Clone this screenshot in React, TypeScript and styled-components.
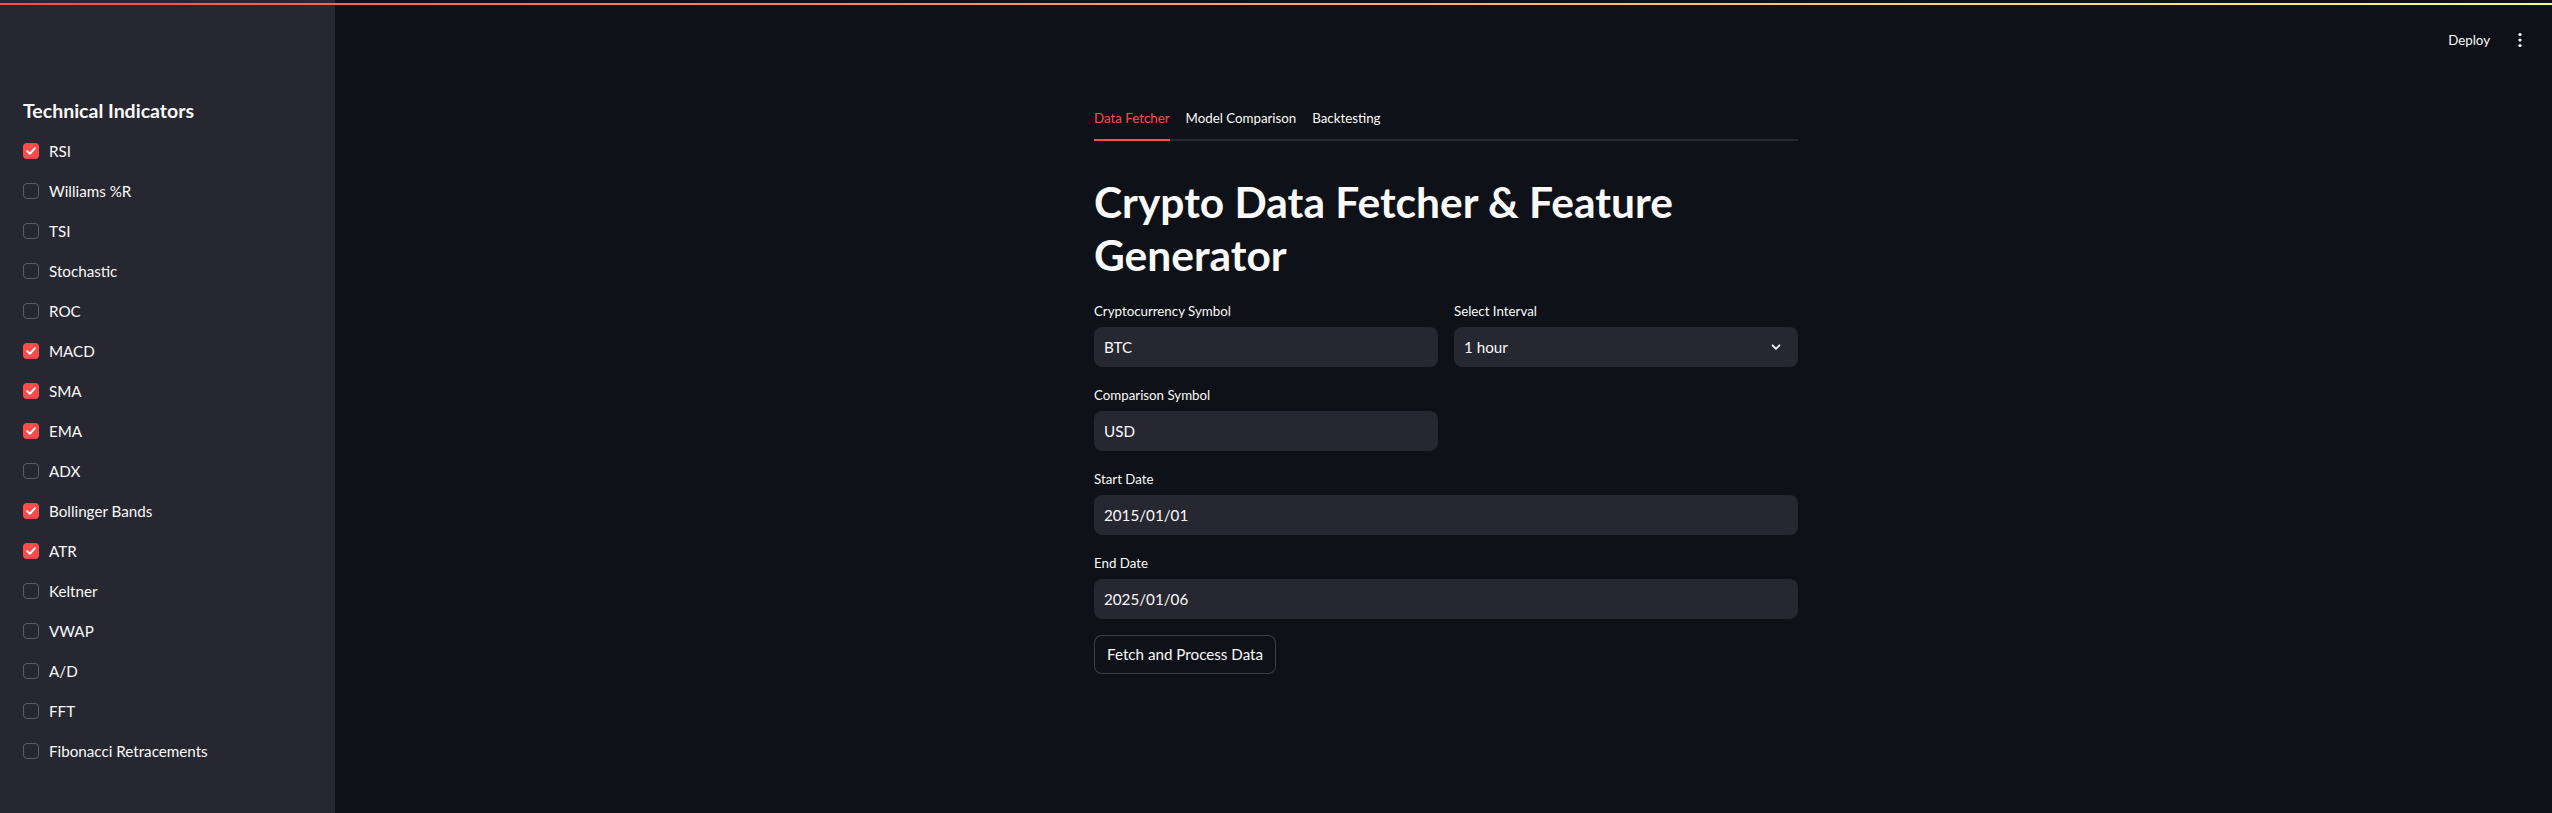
import React from "react";
import styled, { createGlobalStyle } from "styled-components";

const FONT = `"Source Sans Pro", Lato, "Noto Sans", sans-serif`;

const GlobalStyle = createGlobalStyle`
  html, body { margin: 0; padding: 0; background: #0e1117; }
  body { font-family: ${FONT}; color: #fafafa; }
  * { box-sizing: border-box; }
`;

const Page = styled.div`
  position: relative;
  display: flex;
  min-height: 813px;
  background: #0e1117;
`;

const Decoration = styled.div`
  position: absolute;
  top: 3px;
  left: 0;
  right: 0;
  height: 2px;
  background: linear-gradient(90deg, #ff4b4b, #fffd80);
  z-index: 5;
`;

const Sidebar = styled.aside`
  width: 335px;
  flex: 0 0 335px;
  background: #262730;
  padding: 96px 23px 40px;
  display: flex;
  flex-direction: column;
`;

const SideHeading = styled.h2`
  margin: 0 0 13px;
  font-size: 19.5px;
  line-height: 30px;
  font-weight: 700;
  color: #fafafa;
`;

const CheckList = styled.div`
  display: flex;
  flex-direction: column;
  gap: 16px;
`;

const CheckRow = styled.label`
  display: flex;
  align-items: center;
  gap: 10px;
  height: 24px;
  font-size: 15.2px;
  color: #fafafa;
`;

const Box = styled.span<{ $checked: boolean }>`
  width: 16px;
  height: 16px;
  border-radius: 4px;
  flex: 0 0 16px;
  display: flex;
  align-items: center;
  justify-content: center;
  background: ${(p) => (p.$checked ? "#ff4b4b" : "transparent")};
  border: ${(p) => (p.$checked ? "none" : "1px solid #5b5c64")};
`;

const Main = styled.main`
  flex: 1;
  display: flex;
  flex-direction: column;
  padding-left: 5px;
`;

const Header = styled.header`
  height: 80px;
  display: flex;
  align-items: center;
  justify-content: flex-end;
  gap: 14px;
  padding-right: 24px;
`;

const DeployButton = styled.button`
  background: transparent;
  border: none;
  color: #fafafa;
  font-family: ${FONT};
  font-size: 13.3px;
  padding: 0 8px;
  height: 32px;
`;

const KebabButton = styled.button`
  background: transparent;
  border: none;
  width: 16px;
  height: 32px;
  padding: 0;
  display: flex;
  align-items: center;
  justify-content: center;
`;

const Content = styled.section`
  width: 704px;
  margin: 0 auto;
  padding-top: 21px;
  display: flex;
  flex-direction: column;
`;

const TabList = styled.div`
  display: flex;
  gap: 16px;
  border-bottom: 2px solid #262730;
`;

const Tab = styled.div<{ $active?: boolean }>`
  height: 40px;
  margin-bottom: -2px;
  padding-bottom: 4px;
  display: flex;
  align-items: center;
  font-size: 13.3px;
  color: ${(p) => (p.$active ? "#ff4b4b" : "#fafafa")};
  border-bottom: 2px solid ${(p) => (p.$active ? "#ff4b4b" : "transparent")};
`;

const Title = styled.h1`
  margin: 35px 0 17px;
  font-size: 42.5px;
  line-height: 52.8px;
  font-weight: 700;
  color: #fafafa;
  max-width: 620px;
`;

const Form = styled.div`
  display: flex;
  flex-direction: column;
  gap: 16px;
`;

const Row = styled.div`
  display: grid;
  grid-template-columns: 1fr 1fr;
  gap: 16px;
`;

const Field = styled.div`
  display: flex;
  flex-direction: column;
  gap: 4px;
`;

const Label = styled.div`
  height: 24px;
  display: flex;
  align-items: center;
  font-size: 13.3px;
  color: #fafafa;
`;

const InputBox = styled.div`
  height: 40px;
  background: #262730;
  border-radius: 8px;
  padding: 0 10px;
  display: flex;
  align-items: center;
  justify-content: space-between;
  font-size: 15.2px;
  color: #fafafa;
`;

const Button = styled.button`
  align-self: flex-start;
  height: 39px;
  padding: 0 12px;
  background: #0e1117;
  border: 1px solid rgba(250, 250, 250, 0.2);
  border-radius: 8px;
  color: #fafafa;
  font-family: ${FONT};
  font-size: 15.2px;
`;

const indicators: [string, boolean][] = [
  ["RSI", true],
  ["Williams %R", false],
  ["TSI", false],
  ["Stochastic", false],
  ["ROC", false],
  ["MACD", true],
  ["SMA", true],
  ["EMA", true],
  ["ADX", false],
  ["Bollinger Bands", true],
  ["ATR", true],
  ["Keltner", false],
  ["VWAP", false],
  ["A/D", false],
  ["FFT", false],
  ["Fibonacci Retracements", false],
];

const Check = () => (
  <svg width="12" height="12" viewBox="0 0 12 12">
    <path d="M2.2 6.3 L4.8 8.7 L9.8 3.4" fill="none" stroke="#fff" strokeWidth="2" strokeLinecap="round" strokeLinejoin="round" />
  </svg>
);

const Chevron = () => (
  <svg width="12" height="12" viewBox="0 0 12 12" style={{ marginRight: 6 }}>
    <path d="M2.5 4.3 L6 7.8 L9.5 4.3" fill="none" stroke="#fafafa" strokeWidth="1.8" strokeLinecap="round" strokeLinejoin="round" />
  </svg>
);

const Kebab = () => (
  <svg width="6" height="16" viewBox="0 0 6 16">
    <circle cx="3" cy="2.5" r="1.6" fill="#fafafa" />
    <circle cx="3" cy="8" r="1.6" fill="#fafafa" />
    <circle cx="3" cy="13.5" r="1.6" fill="#fafafa" />
  </svg>
);

export default function App() {
  return (
    <>
      <GlobalStyle />
      <Page>
        <Decoration />
        <Sidebar>
          <SideHeading>Technical Indicators</SideHeading>
          <CheckList>
            {indicators.map(([name, on]) => (
              <CheckRow key={name}>
                <Box $checked={on}>{on && <Check />}</Box>
                {name}
              </CheckRow>
            ))}
          </CheckList>
        </Sidebar>
        <Main>
          <Header>
            <DeployButton>Deploy</DeployButton>
            <KebabButton>
              <Kebab />
            </KebabButton>
          </Header>
          <Content>
            <TabList>
              <Tab $active>Data Fetcher</Tab>
              <Tab>Model Comparison</Tab>
              <Tab>Backtesting</Tab>
            </TabList>
            <Title>Crypto Data Fetcher &amp; Feature Generator</Title>
            <Form>
              <Row>
                <Field>
                  <Label>Cryptocurrency Symbol</Label>
                  <InputBox>BTC</InputBox>
                </Field>
                <Field>
                  <Label>Select Interval</Label>
                  <InputBox>
                    1 hour
                    <Chevron />
                  </InputBox>
                </Field>
              </Row>
              <Row>
                <Field>
                  <Label>Comparison Symbol</Label>
                  <InputBox>USD</InputBox>
                </Field>
              </Row>
              <Field>
                <Label>Start Date</Label>
                <InputBox>2015/01/01</InputBox>
              </Field>
              <Field>
                <Label>End Date</Label>
                <InputBox>2025/01/06</InputBox>
              </Field>
              <Button>Fetch and Process Data</Button>
            </Form>
          </Content>
        </Main>
      </Page>
    </>
  );
}
